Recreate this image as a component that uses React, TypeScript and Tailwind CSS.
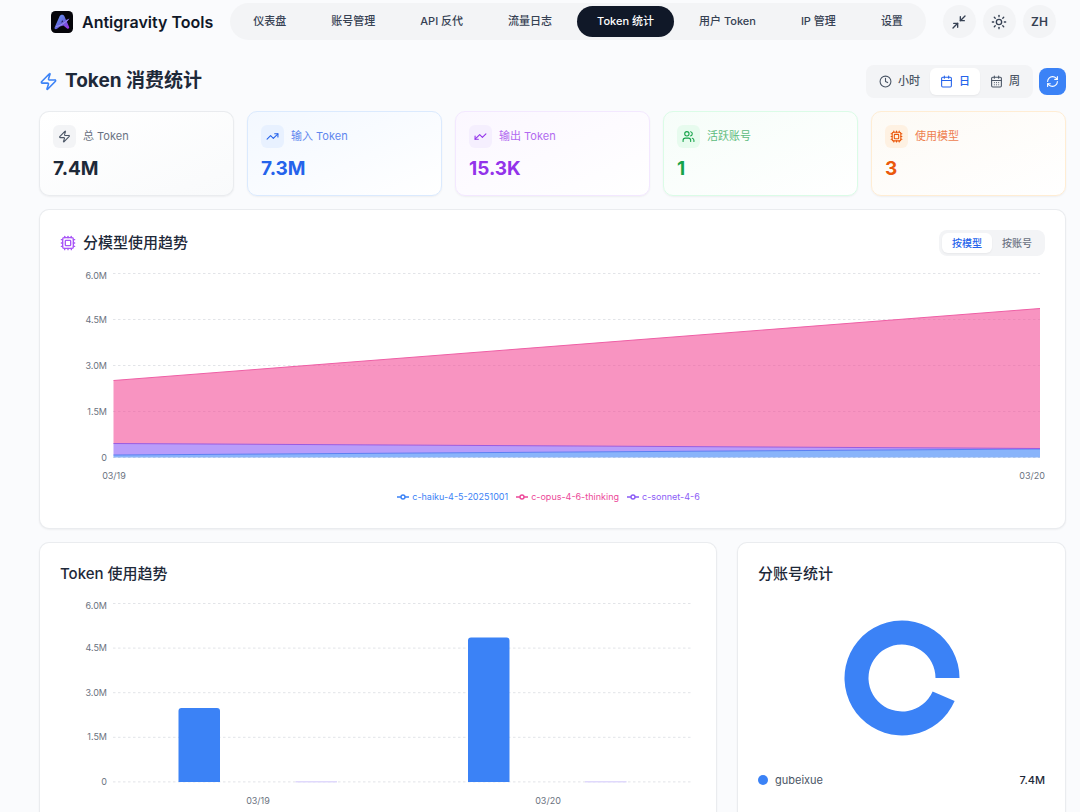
import { useState } from "react";
import {
  Calendar,
  CalendarDays,
  Clock,
  Cpu,
  Minimize2,
  RefreshCw,
  Sun,
  TrendingUp,
  Users,
  Zap,
} from "lucide-react";

const navItems = ["仪表盘", "账号管理", "API 反代", "流量日志", "Token 统计", "用户 Token", "IP 管理", "设置"];

const ranges = [
  { id: "hour", label: "小时", icon: Clock },
  { id: "day", label: "日", icon: Calendar },
  { id: "week", label: "周", icon: CalendarDays },
];

const stats = [
  {
    label: "总 Token",
    value: "7.4M",
    icon: Zap,
    iconClass: "",
    card: "border-gray-200/80 from-white to-gray-50",
    box: "bg-gray-100 text-gray-600",
    text: "text-gray-500",
    num: "text-gray-800",
  },
  {
    label: "输入 Token",
    value: "7.3M",
    icon: TrendingUp,
    iconClass: "",
    card: "border-blue-100 from-[#f3f8ff] to-white",
    box: "bg-[#e8f1ff] text-[#2563eb]",
    text: "text-[#5f87ee]",
    num: "text-[#2563eb]",
  },
  {
    label: "输出 Token",
    value: "15.3K",
    icon: TrendingUp,
    iconClass: "rotate-180",
    card: "border-purple-100 from-[#fbf7ff] to-white",
    box: "bg-[#f5effe] text-[#9333ea]",
    text: "text-[#b26bf0]",
    num: "text-[#9333ea]",
  },
  {
    label: "活跃账号",
    value: "1",
    icon: Users,
    iconClass: "",
    card: "border-green-100 from-[#f6fdf9] to-white",
    box: "bg-[#e7fbee] text-[#16a34a]",
    text: "text-[#5dbb7d]",
    num: "text-[#16a34a]",
  },
  {
    label: "使用模型",
    value: "3",
    icon: Cpu,
    iconClass: "",
    card: "border-orange-100 from-[#fdfaf5] to-white",
    box: "bg-[#fef1e2] text-[#ea580c]",
    text: "text-[#ee8150]",
    num: "text-[#ea580c]",
  },
];

const legend = [
  { name: "c-haiku-4-5-20251001", color: "text-[#3b82f6]" },
  { name: "c-opus-4-6-thinking", color: "text-[#ec4899]" },
  { name: "c-sonnet-4-6", color: "text-[#8b5cf6]" },
];

const ticks = ["6.0M", "4.5M", "3.0M", "1.5M", "0"];

const fontClass = "font-[Inter,'Noto_Sans_CJK_SC',sans-serif]";
const panelClass = "rounded-[10px] border border-gray-200/80 bg-white p-5 shadow-xs";

function Logo() {
  return (
    <svg viewBox="0 0 22 22" className="size-[22px] shrink-0" aria-hidden="true">
      <defs>
        <linearGradient id="logo-fill" x1="0" y1="0" x2="1" y2="1">
          <stop offset="0" stopColor="#6aa0f5" />
          <stop offset="0.5" stopColor="#6468dc" />
          <stop offset="1" stopColor="#a32be6" />
        </linearGradient>
      </defs>
      <rect width="22" height="22" rx="4.5" fill="#05050a" />
      <path
        d="M8.600 5.300C9.500 3.400 12.300 3.200 13.300 5.100l1.700 3.900 3.600-1.400-2.700 3.200 2.200 5.300c.5 1.300-.8 2.100-2 1.500l-3.700-3.100-3.400.9-2.900 2.400c-1.500 1-3.100 0-2.400-1.600z"
        fill="url(#logo-fill)"
      />
      <path d="M5 15.500c3.800-.4 8-3 12.500-7.100" stroke="#b9b3f5" strokeWidth="0.6" fill="none" />
      <path d="M10.200 11.800l1-2.800 1 1.800z" fill="#221d55" />
    </svg>
  );
}

// Horizontal dashed lines with their tick labels
function Grid({ x1, x2, top, step }: { x1: number; x2: number; top: number; step: number }) {
  return (
    <g>
      {ticks.map((t, i) => (
        <g key={t}>
          <line
            x1={x1}
            x2={x2}
            y1={top + i * step}
            y2={top + i * step}
            stroke="#e2e4e8"
            strokeDasharray="2.5 2.5"
          />
          <text x={47} y={top + i * step + (i === 0 ? 5 : 3)} textAnchor="end" fontSize="9" fill="#6b7280">
            {t}
          </text>
        </g>
      ))}
    </g>
  );
}

function AreaChart() {
  return (
    <svg viewBox="0 0 985 220" className="mt-1 block h-auto w-full" role="img" aria-label="分模型使用趋势">
      <Grid x1={53} x2={980} top={13.5} step={46} />
      <path d="M53.5 195L980 189V197.500H53.500z" fill="#3b82f6" fillOpacity="0.6" />
      <path d="M53.5 183.500L980 188.500V189L53.500 195z" fill="#8b5cf6" fillOpacity="0.6" />
      <path d="M53.5 120.500L980 48.500V188.500L53.500 183.500z" fill="#f34d98" fillOpacity="0.6" />
      <path d="M53.5 195L980 189" stroke="#5b7ff2" />
      <path d="M53.5 183.500L980 188.500" stroke="#9a5ce0" />
      <path d="M53.5 120.500L980 48.500" stroke="#ee5fa5" />
      <g fontSize="9" fill="#6b7280">
        <text x={54} y={219} textAnchor="middle">03/19</text>
        <text x={985} y={219} textAnchor="end">03/20</text>
      </g>
    </svg>
  );
}

function BarChart() {
  return (
    <svg viewBox="0 0 636 220" className="mt-[6px] block h-auto w-full" role="img" aria-label="Token 使用趋势">
      <Grid x1={53} x2={633} top={11.5} step={44.6} />
      <path d="M118.500 190V119a3 3 0 0 1 3-3h35.500a3 3 0 0 1 3 3V190z" fill="#3b82f6" />
      <path d="M408 190V48.500a3 3 0 0 1 3-3h35.500a3 3 0 0 1 3 3V190z" fill="#3b82f6" />
      <rect x={235.500} y={189} width={41.500} height={1.500} fill="#e0d9fc" />
      <rect x={525} y={189} width={41.500} height={1.500} fill="#e0d9fc" />
      <g fontSize="9" fill="#6b7280" textAnchor="middle">
        <text x={198} y={212}>03/19</text>
        <text x={488} y={212}>03/20</text>
      </g>
    </svg>
  );
}

function Donut() {
  return (
    <svg viewBox="0 0 116 116" className="size-[116px]" role="img" aria-label="分账号统计">
      <path
        d="M115.500 58A57.500 57.500 0 1 0 110.650 81.110L88.650 71.470A33.500 33.500 0 1 1 91.500 58z"
        fill="#3b82f6"
      />
    </svg>
  );
}

export default function App() {
  const [page, setPage] = useState("Token 统计");
  const [range, setRange] = useState("day");
  const [view, setView] = useState("按模型");

  return (
    <div className={`h-screen overflow-y-auto bg-[#fafbfd] text-gray-800 [scrollbar-width:none] ${fontClass}`}>
      <header className="flex items-center justify-between gap-4 pt-[3px] pr-6 pl-[51px]">
        <a href="#" className="flex shrink-0 items-center gap-[9px] text-base font-semibold text-gray-900">
          <Logo />
          Antigravity Tools
        </a>

        <nav className="flex items-center gap-[5px] rounded-full bg-gray-100 p-[3px]">
          {navItems.map((item) => (
            <button
              key={item}
              onClick={() => setPage(item)}
              className={`h-[31px] rounded-full px-5 text-[11px] font-medium whitespace-nowrap ${
                page === item ? "bg-gray-900 text-white" : "text-gray-700"
              }`}
            >
              {item}
            </button>
          ))}
        </nav>

        <div className="flex shrink-0 items-center gap-[7px] text-gray-700">
          <button className="flex size-[33px] items-center justify-center rounded-full bg-gray-100" aria-label="迷你视图">
            <Minimize2 size={16} />
          </button>
          <button className="flex size-[33px] items-center justify-center rounded-full bg-gray-100" aria-label="切换主题">
            <Sun size={16} />
          </button>
          <button className="flex size-[33px] items-center justify-center rounded-full bg-gray-100 text-xs font-semibold">
            ZH
          </button>
        </div>
      </header>

      <main className="flex flex-col gap-[13px] pt-[25px] pr-[14px] pb-5 pl-[39px]">
        <div className="flex items-center justify-between">
          <h1 className="flex items-center gap-[7px] text-[19px] font-bold text-gray-800">
            <Zap size={19} className="text-[#3b82f6]" />
            Token 消费统计
          </h1>
          <div className="flex items-center gap-[6px]">
            <div className="flex rounded-lg bg-gray-100 p-[3px]">
              {ranges.map(({ id, label, icon: Icon }) => (
                <button
                  key={id}
                  onClick={() => setRange(id)}
                  className={`flex h-[27px] items-center gap-[6px] rounded-md px-[10px] text-[11px] font-medium ${
                    range === id ? "bg-white text-[#2563eb] shadow-xs" : "text-gray-600"
                  }`}
                >
                  <Icon size={13} />
                  {label}
                </button>
              ))}
            </div>
            <button className="flex size-[27px] items-center justify-center rounded-lg bg-[#3b82f6] text-white" aria-label="刷新">
              <RefreshCw size={13} />
            </button>
          </div>
        </div>

        <div className="grid grid-cols-5 gap-[13px]">
          {stats.map(({ label, value, icon: Icon, iconClass, card, box, text, num }) => (
            <div key={label} className={`rounded-[10px] border bg-linear-to-br p-[13px] shadow-xs ${card}`}>
              <div className={`flex items-center gap-[7px] text-[11px] ${text}`}>
                <span className={`flex size-[23px] items-center justify-center rounded-md ${box}`}>
                  <Icon size={13} className={iconClass} />
                </span>
                {label}
              </div>
              <div className={`mt-2 text-[19px] leading-[26px] font-bold ${num}`}>{value}</div>
            </div>
          ))}
        </div>

        <section className={panelClass}>
          <div className="flex items-center justify-between">
            <h2 className="flex items-center gap-[7px] text-[15px] font-medium">
              <Cpu size={16} className="text-[#a855f7]" />
              分模型使用趋势
            </h2>
            <div className="flex rounded-lg bg-gray-100 p-[3px]">
              {["按模型", "按账号"].map((v) => (
                <button
                  key={v}
                  onClick={() => setView(v)}
                  className={`h-5 rounded-md px-[10px] text-[10px] font-medium ${
                    view === v ? "bg-white text-[#2563eb] shadow-xs" : "text-gray-500"
                  }`}
                >
                  {v}
                </button>
              ))}
            </div>
          </div>
          <AreaChart />
          <ul className="mt-[10px] flex justify-center gap-2 pr-2 pb-1 text-[9px] leading-[14px]">
            {legend.map((l) => (
              <li key={l.name} className={`flex items-center gap-[3px] ${l.color}`}>
                <svg viewBox="0 0 12 12" className="size-3" fill="none" stroke="currentColor" strokeWidth="1.400">
                  <path d="M0 6h4M8 6h4" />
                  <circle cx="6" cy="6" r="2" />
                </svg>
                {l.name}
              </li>
            ))}
          </ul>
        </section>

        <div className="grid grid-cols-3 gap-5">
          <section className={`col-span-2 ${panelClass}`}>
            <h2 className="text-[15px] font-medium">Token 使用趋势</h2>
            <BarChart />
          </section>

          <section className={panelClass}>
            <h2 className="text-[15px] font-medium">分账号统计</h2>
            <div className="flex justify-center pt-[34px] pb-9">
              <Donut />
            </div>
            <div className="flex items-center justify-between text-[11px]">
              <span className="flex items-center gap-[7px] text-gray-600">
                <span className="size-[10px] rounded-full bg-[#3b82f6]" />
                gubeixue
              </span>
              <span className="font-medium">7.4M</span>
            </div>
          </section>
        </div>
      </main>
    </div>
  );
}
